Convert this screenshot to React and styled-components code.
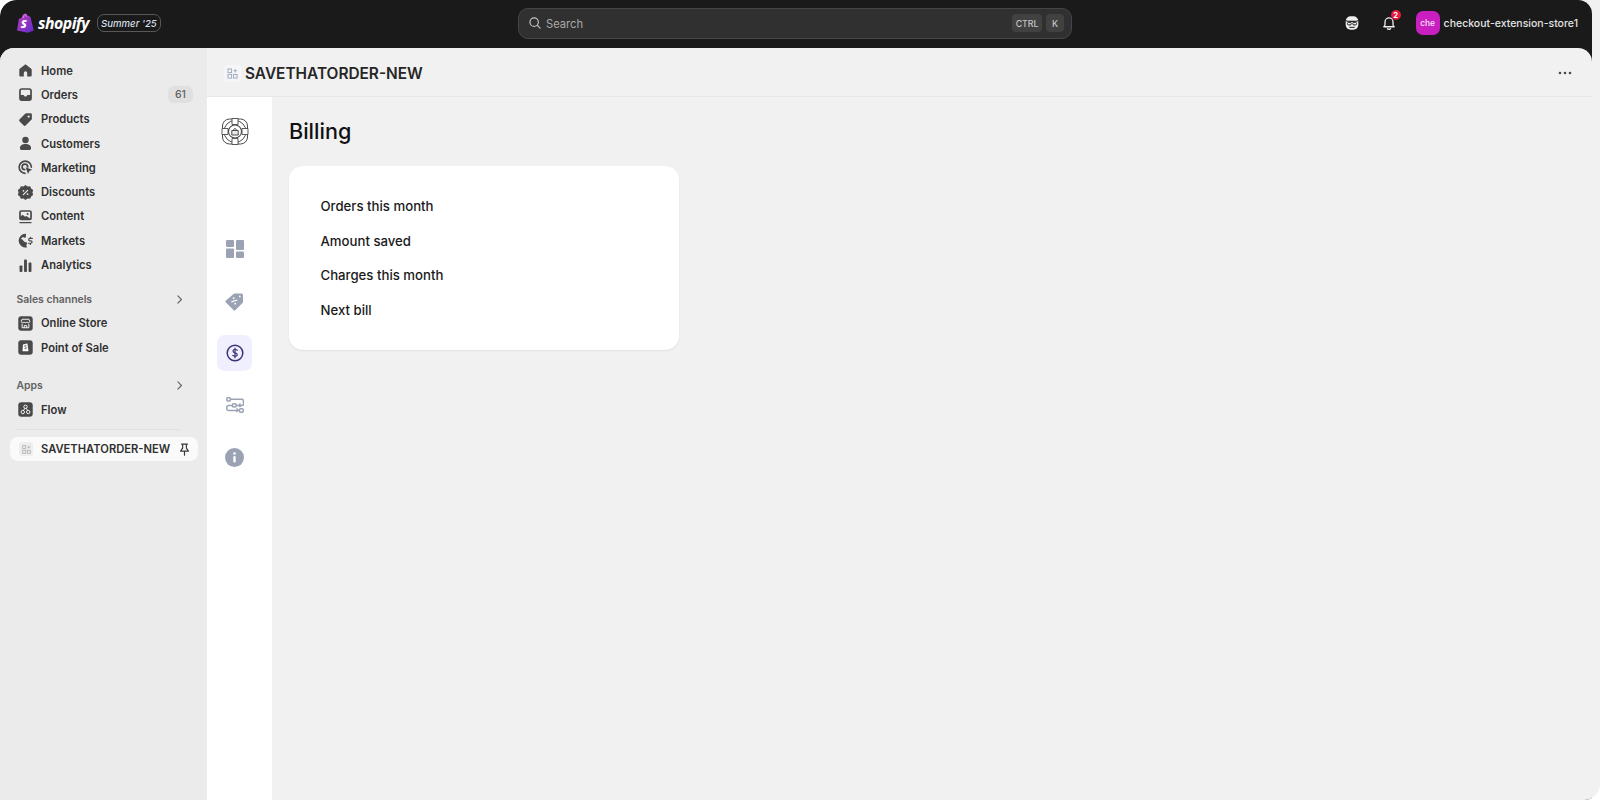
import React from "react";
import styled, { createGlobalStyle } from "styled-components";

const GlobalStyle = createGlobalStyle`
  html, body { margin: 0; padding: 0; background: #fff; }
  body { font-family: Inter, "Liberation Sans", sans-serif; }
`;

const Frame = styled.div`
  width: 1600px;
  height: 800px;
  border-radius: 16px 0 16px 0;
  overflow: hidden;
  display: flex;
  background: #f1f1f1;
`;

const Shell = styled.div`
  flex: 1;
  min-width: 0;
  margin-right: 8px;
  display: flex;
  flex-direction: column;
  background: #1a1a1a;
  border-radius: 16px 14px 0 0;
`;

const TopBar = styled.header`
  height: 48px;
  flex: none;
  display: grid;
  grid-template-columns: 505px 554px 1fr;
  align-items: center;
  padding: 0 14px 2px 13px;
  box-sizing: border-box;
`;

const Brand = styled.div`
  display: flex;
  align-items: center;
  padding-left: 4px;
`;

const Wordmark = styled.span`
  font-family: "Open Sans", sans-serif;
  font-style: italic;
  font-weight: 700;
  font-size: 15.8px;
  letter-spacing: -0.5px;
  color: #fff;
  margin-left: 4px;
`;

const Season = styled.span`
  margin-left: 8px;
  height: 18px;
  width: 64px;
  box-sizing: border-box;
  border: 1px solid #585858;
  border-radius: 7px;
  display: flex;
  align-items: center;
  justify-content: center;
  font-size: 9.6px;
  font-style: italic;
  font-weight: 500;
  color: #d5dfe8;
`;

const Search = styled.div`
  height: 31px;
  box-sizing: border-box;
  background: #303030;
  border: 1px solid #454545;
  border-radius: 10px;
  display: flex;
  align-items: center;
  padding: 0 7px 0 9px;
  color: #a8a8a8;
  font-size: 11.2px;
`;

const SearchText = styled.span`
  margin-left: 4px;
  padding-top: 1px;
  flex: 1;
`;

const Key = styled.kbd`
  font-family: Inter, sans-serif;
  font-size: 8.8px;
  font-weight: 500;
  height: 18px;
  min-width: 18px;
  padding: 0 3.5px;
  box-sizing: border-box;
  margin-left: 4px;
  background: #414141;
  border-radius: 4px;
  color: #c4c4c4;
  display: flex;
  align-items: center;
  justify-content: center;
`;

const TopActions = styled.div`
  display: flex;
  align-items: center;
  justify-content: flex-end;
`;

const ActionIcon = styled.span`
  position: relative;
  display: flex;
  margin-right: ${(props) => props.gap}px;
`;

const Count = styled.span`
  position: absolute;
  top: -5px;
  right: -4px;
  width: 10px;
  height: 10px;
  border-radius: 50%;
  background: #e51c3f;
  color: #fff;
  font-size: 7.5px;
  font-weight: 700;
  display: flex;
  align-items: center;
  justify-content: center;
`;

const Avatar = styled.span`
  width: 24px;
  height: 24px;
  border-radius: 7px;
  background: #c91fc0;
  color: #f8e3f6;
  font-size: 8.4px;
  font-weight: 500;
  display: flex;
  align-items: center;
  justify-content: center;
`;

const StoreName = styled.span`
  margin-left: 4px;
  font-size: 10.5px;
  font-weight: 500;
  color: #e3e3e3;
  white-space: nowrap;
`;

const Body = styled.div`
  flex: 1;
  min-height: 0;
  display: flex;
  background: #f1f1f1;
  border-radius: 14px 14px 0 0;
  overflow: hidden;
`;

const Sidebar = styled.nav`
  width: 207px;
  flex: none;
  background: #ebebeb;
  padding: 10.5px 10px 0 9.5px;
  box-sizing: border-box;
`;

const NavItem = styled.div`
  height: 24.3px;
  display: flex;
  align-items: center;
  padding-left: 7.5px;
  font-size: 11.2px;
  font-weight: 600;
  color: #303030;
`;

const NavIcon = styled.span`
  width: 17px;
  height: 17px;
  display: flex;
  margin-right: 7px;
  flex: none;
`;

const NavCount = styled.span`
  margin-left: auto;
  margin-right: 4px;
  width: 25px;
  height: 17px;
  border-radius: 6px;
  background: #e0e0e0;
  color: #616161;
  font-size: 10.5px;
  font-weight: 500;
  display: flex;
  align-items: center;
  justify-content: center;
`;

const SectionHead = styled.div`
  height: 24px;
  margin-top: ${(props) => props.top}px;
  display: flex;
  align-items: center;
  justify-content: space-between;
  padding: 0 11px 0 7px;
  font-size: 10.4px;
  font-weight: 600;
  color: #616161;
`;

const Divider = styled.div`
  height: 1px;
  margin: 7px 6px 7px;
  width: 165px;
  background: #e1e1e1;
`;

const PinnedApp = styled.div`
  height: 24px;
  width: 188px;
  border-radius: 8px;
  background: #fafafa;
  display: flex;
  align-items: center;
  padding: 0 5.5px 0 7.5px;
  box-sizing: border-box;
  font-size: 11.2px;
  font-weight: 600;
  color: #303030;
  white-space: nowrap;
`;

const AppTile = styled.span`
  width: 14px;
  height: 14px;
  margin: 0 8px 0 2px;
  background: #eeeeee;
  border-radius: 3px;
  flex: none;
  display: flex;
  align-items: center;
  justify-content: center;
`;

const PinHolder = styled.span`
  margin-left: auto;
  display: flex;
`;

const Main = styled.main`
  flex: 1;
  min-width: 0;
  display: flex;
  flex-direction: column;
`;

const AppBar = styled.div`
  height: 49px;
  flex: none;
  box-sizing: border-box;
  border-bottom: 1px solid #e8e8e8;
  display: flex;
  align-items: center;
  padding: 2px 20px 0 17px;
`;

const TitleTile = styled.span`
  width: 17px;
  height: 17px;
  border-radius: 4px;
  background: #f5f6f8;
  display: flex;
  align-items: center;
  justify-content: center;
  margin-right: 4px;
`;

const AppTitle = styled.h2`
  margin: 0;
  font-size: 15.4px;
  font-weight: 600;
  color: #262626;
`;

const MoreDots = styled.span`
  margin-left: auto;
  display: flex;
`;

const Workspace = styled.div`
  flex: 1;
  display: flex;
  min-height: 0;
`;

const Rail = styled.aside`
  width: 65px;
  flex: none;
  background: #fff;
  display: flex;
  flex-direction: column;
  align-items: center;
  padding: 20px 10px 0 0;
  box-sizing: border-box;
`;

const RailLogo = styled.div`
  display: flex;
  margin-bottom: 86px;
`;

const RailList = styled.div`
  display: flex;
  flex-direction: column;
  gap: 16px;
`;

const RailItem = styled.div`
  width: 35px;
  height: 36px;
  border-radius: 8px;
  display: flex;
  align-items: center;
  justify-content: center;
  background: ${(props) => (props.$active ? "#f0effd" : "transparent")};
`;

const Content = styled.section`
  flex: 1;
  padding: 19px 17px;
`;

const PageTitle = styled.h1`
  margin: 0 0 20px;
  font-size: 21.6px;
  line-height: 30px;
  font-weight: 500;
  color: #111;
`;

const Card = styled.div`
  width: 390px;
  height: 184px;
  box-sizing: border-box;
  background: #fff;
  border-radius: 14px;
  box-shadow: 0 1px 2px rgba(0, 0, 0, 0.07);
  padding: 23px 31.5px;
  display: flex;
  flex-direction: column;
`;

const Stat = styled.div`
  height: 34.7px;
  display: flex;
  align-items: center;
  font-size: 13.2px;
  font-weight: 500;
  color: #1a1a1a;
`;

const Svg = ({ size = 17, box = 20, children, ...rest }) => (
  <svg width={size} height={size} viewBox={`0 0 ${box} ${box}`} fill="none" {...rest}>
    {children}
  </svg>
);

const DARK = "#4a4a4a";

const HomeIcon = () => (
  <Svg>
    <path d="M10 2.500 3.200 8a1.500 1.500 0 0 0-.5 1.100V15.500A1.500 1.500 0 0 0 4.200 17H8v-4.200a2 2 0 0 1 4 0V17h3.800a1.500 1.500 0 0 0 1.500-1.500V9.100a1.500 1.500 0 0 0-.5-1.100L10 2.500Z" fill={DARK} />
  </Svg>
);
const OrdersIcon = () => (
  <Svg>
    <path fillRule="evenodd" d="M5.500 2.500h9A3 3 0 0 1 17.500 5.500v9a3 3 0 0 1-3 3h-9a3 3 0 0 1-3-3v-9a3 3 0 0 1 3-3Zm-1 8h2.700c.4 0 .7.200.9.500l.4.800c.2.300.5.500.9.500h1.200c.4 0 .7-.2.9-.5l.4-.8c.2-.3.5-.5.9-.5h2.700V5.500a1 1 0 0 0-1-1h-9a1 1 0 0 0-1 1V10.500Z" fill={DARK} />
  </Svg>
);
const ProductsIcon = () => (
  <Svg>
    <path fillRule="evenodd" d="M11 2.500h5A1.500 1.500 0 0 1 17.500 4v5a2 2 0 0 1-.6 1.400l-6.500 6.500a2 2 0 0 1-2.800 0l-4.500-4.500a2 2 0 0 1 0-2.800l6.500-6.500A2 2 0 0 1 11 2.500Zm2.700 5.300a1.300 1.300 0 1 0 0-2.600 1.300 1.300 0 0 0 0 2.600Z" fill={DARK} />
  </Svg>
);
const CustomersIcon = () => (
  <Svg>
    <circle cx="10" cy="6" r="3.800" fill={DARK} />
    <path d="M3.500 15.200c0-3 2.900-4.500 6.500-4.500s6.500 1.500 6.500 4.500v.8a1.500 1.500 0 0 1-1.500 1.500H5A1.500 1.500 0 0 1 3.500 16v-.8Z" fill={DARK} />
  </Svg>
);
const MarketingIcon = () => (
  <Svg>
    <path d="M9.500 16.800a7.200 7.200 0 1 1 7.400-7.300" stroke={DARK} strokeWidth="2" strokeLinecap="round" />
    <path d="M9 12.600a3.300 3.300 0 1 1 3.600-3.300" stroke={DARK} strokeWidth="2" strokeLinecap="round" />
    <path d="m10 9.800 8 2.700-3.300 1.600-1.700 3.500-3-7.800Z" fill={DARK} />
  </Svg>
);
const DiscountsIcon = () => (
  <Svg>
    <path d="M10 1.200l2.500 1.600 3-.2 1.100 2.800 2.400 1.800-.8 2.800.8 2.800-2.400 1.800-1.100 2.800-3-.2L10 18.800l-2.500-1.600-3 .2-1.100-2.800L1 12.800l.8-2.800L1 7.200l2.400-1.800 1.100-2.800 3 .2L10 1.200Z" fill={DARK} />
    <path d="m7.500 12.500 5-5" stroke="#ebebeb" strokeWidth="1.400" strokeLinecap="round" />
    <circle cx="7.600" cy="8" r="1" fill="#ebebeb" />
    <circle cx="12.400" cy="12" r="1" fill="#ebebeb" />
  </Svg>
);
const ContentIcon = () => (
  <Svg>
    <path fillRule="evenodd" d="M5 2.500h10A2.500 2.500 0 0 1 17.500 5v7a2.500 2.500 0 0 1-2.500 2.500H5A2.500 2.500 0 0 1 2.500 12V5A2.500 2.500 0 0 1 5 2.500Zm0 2a.5.5 0 0 0-.5.500v4.600l2-1.600 3 2.400 1.500-1 4 2.800h.5V5a.5.5 0 0 0-.5-.5H5Z" fill={DARK} />
    <circle cx="12.500" cy="7" r="1.200" fill={DARK} />
    <path d="M3.500 17.200h13" stroke={DARK} strokeWidth="1.600" strokeLinecap="round" />
  </Svg>
);
const MarketsIcon = () => (
  <Svg>
    <path d="M10.500 2.200a8 8 0 1 0 1.500 15.700c-1.400-1.100-1.200-2.600-.3-3.800.7-.9 0-2-1.300-2-1.700 0-2.400-1.100-3.400-2.600L4.700 8c.7-1.700 2.500-2.300 3.900-1.500.9.500 1.900 0 1.900-1V2.200Z" fill={DARK} />
    <path d="M18 7.600h-2.800a1.400 1.400 0 0 0 0 2.800h1.100a1.400 1.400 0 0 1 0 2.800H13.500M15.700 6.200v1.400m0 5.600v1.400" stroke={DARK} strokeWidth="1.400" strokeLinecap="round" />
  </Svg>
);
const AnalyticsIcon = () => (
  <Svg>
    <rect x="3" y="10" width="3.400" height="7.500" rx="1" fill={DARK} />
    <rect x="8.300" y="3" width="3.400" height="14.500" rx="1" fill={DARK} />
    <rect x="13.600" y="6.500" width="3.400" height="11" rx="1" fill={DARK} />
  </Svg>
);
const StoreIcon = () => (
  <Svg>
    <rect x="1.500" y="1.500" width="17" height="17" rx="3.500" fill={DARK} />
    <path d="M6 5h8l1 2.700a1.700 1.700 0 0 1-3.300.4 1.900 1.900 0 0 1-3.400 0A1.700 1.700 0 0 1 5 7.700L6 5Z" stroke="#fff" strokeWidth="1.100" />
    <path d="M6 10.500V15h8v-4.500M8.500 15v-2.500h3V15" stroke="#fff" strokeWidth="1.100" />
  </Svg>
);
const PosIcon = () => (
  <Svg>
    <rect x="1.500" y="1.500" width="17" height="17" rx="3.500" fill={DARK} />
    <path d="M7 6.500 11.800 5.300c.2 0 .4 0 .5.300L13.500 14.500H6.500L7 6.500Z" fill="#fff" />
    <path d="M11 7.800c-.8-.5-2-.3-2 .6 0 1.100 2 1 2 2.200 0 1-1.300 1.200-2.200.7" stroke={DARK} strokeWidth="1" />
  </Svg>
);
const FlowIcon = () => (
  <Svg>
    <rect x="1.500" y="1.500" width="17" height="17" rx="3.500" fill={DARK} />
    <circle cx="10" cy="6.800" r="2" stroke="#fff" strokeWidth="1.100" />
    <circle cx="6.800" cy="13" r="2" stroke="#fff" strokeWidth="1.100" />
    <circle cx="13.200" cy="13" r="2" stroke="#fff" strokeWidth="1.100" />
    <path d="m9 8.600-1.300 2.600m3.300-2.600 1.300 2.600" stroke="#fff" strokeWidth="1.100" />
  </Svg>
);
const Chevron = () => (
  <Svg size={13}>
    <path d="m7.500 4.500 5.500 5.500-5.500 5.500" stroke="#616161" strokeWidth="1.700" strokeLinecap="round" strokeLinejoin="round" />
  </Svg>
);
const PinIcon = () => (
  <Svg size={15}>
    <path d="M6 2.800h8M7.500 2.800v5.400L4.800 12.200h10.400l-2.700-4V2.800M10 12.200v5.300" stroke="#3a3a3a" strokeWidth="1.600" strokeLinecap="round" strokeLinejoin="round" />
  </Svg>
);
const AppMark = ({ color, size }) => (
  <Svg size={size}>
    <g stroke={color} strokeWidth="1.600">
      <rect x="3" y="3" width="5.500" height="5.500" />
      <rect x="3" y="11.500" width="5.500" height="5.500" />
      <rect x="11.500" y="11.500" width="5.500" height="5.500" />
      <path d="M14.200 3v5.500M11.500 5.700h5.500" />
    </g>
  </Svg>
);

const ShopifyBag = () => (
  <svg width="17" height="20" viewBox="0 0 17 20">
    <defs>
      <linearGradient id="bag" x1="0" y1="0" x2="1" y2="1">
        <stop offset="0" stopColor="#c23fbe" />
        <stop offset="1" stopColor="#5e2bc9" />
      </linearGradient>
    </defs>
    <path d="M4.500 5C5 2.500 6.500.6 8.300.6c1.300 0 2 1.200 2.300 2.300L12 2.700l1.500 1.500L16.800 17.500 10.800 19.700 0 17.600 2 5.700 4.500 5Z" fill="url(#bag)" />
    <path d="M6.200 5.200C6.600 3 7.500 1.600 8.500 1.600c.6 0 1 1 1.100 2" stroke="#e9a8e0" strokeWidth=".8" fill="none" />
    <text x="3.800" y="15.200" fontFamily="Open Sans, sans-serif" fontWeight="800" fontStyle="italic" fontSize="11" fill="#fff">S</text>
  </svg>
);

const SearchIcon = () => (
  <Svg size={14}>
    <circle cx="8.800" cy="8.800" r="6" stroke="#c4c4c4" strokeWidth="1.700" />
    <path d="m13.300 13.300 4 4" stroke="#c4c4c4" strokeWidth="1.700" strokeLinecap="round" />
  </Svg>
);
const MaskIcon = () => (
  <Svg size={18}>
    <rect x="3" y="2.500" width="14" height="15" rx="5.500" fill="#eeeeee" />
    <path d="M3 7.500c2 .8 12 .8 14 0" stroke="#1a1a1a" strokeWidth="1.300" />
    <rect x="5" y="9.300" width="4.200" height="2.800" rx="1.200" stroke="#1a1a1a" strokeWidth="1.100" />
    <rect x="10.800" y="9.300" width="4.200" height="2.800" rx="1.200" stroke="#1a1a1a" strokeWidth="1.100" />
    <path d="M7.500 14.800h5" stroke="#1a1a1a" strokeWidth="1.100" strokeLinecap="round" />
  </Svg>
);
const BellIcon = () => (
  <Svg size={16}>
    <path d="M5 12.500V8.700a5 5 0 0 1 10 0v3.800l1.500 2.200h-13L5 12.500Z" stroke="#f0f0f0" strokeWidth="1.600" strokeLinejoin="round" />
    <path d="M8 17.200c.8.800 3.200.8 4 0" stroke="#f0f0f0" strokeWidth="1.600" strokeLinecap="round" />
  </Svg>
);
const Dots = () => (
  <svg width="14" height="4" viewBox="0 0 14 4">
    <circle cx="2" cy="2" r="1.300" fill="#4a4a4a" />
    <circle cx="7" cy="2" r="1.300" fill="#4a4a4a" />
    <circle cx="12" cy="2" r="1.300" fill="#4a4a4a" />
  </svg>
);

const LifeRing = () => (
  <svg width="28" height="28" viewBox="0 0 28 28" fill="none" stroke="#4a4a4a">
    <rect x="1.500" y="2" width="25" height="25" rx="7" strokeWidth="1" />
    <circle cx="14" cy="14.500" r="11" strokeWidth="1" fill="#fff" />
    <circle cx="14" cy="14.500" r="6.500" strokeWidth="1.100" />
    <path d="M11 1.500h6v6h-6zM11 21.500h6v6h-6zM1 11.500h6v6H1zM21 11.500h6v6h-6z" strokeWidth=".9" fill="#fff" />
    <path d="M10.800 18v-4.500h6.400V18Zm1.700-4.500c0-2.600 3-2.600 3 0" strokeWidth="1" fill="#e8e8e8" />
  </svg>
);

const RAIL = "#9aa2b3";
const DashboardIcon = () => (
  <svg width="18" height="18" viewBox="0 0 18 18" fill={RAIL}>
    <rect x="0" y="0" width="8" height="7" rx="1" />
    <rect x="0" y="8.500" width="8" height="9.500" rx="1" />
    <rect x="10" y="0" width="8" height="10" rx="1" />
    <rect x="10" y="11.500" width="8" height="6.500" rx="1" />
  </svg>
);
const PriceTagIcon = () => (
  <svg width="19" height="19" viewBox="0 0 19 19">
    <path fillRule="evenodd" d="M9.500 1.500h7A1.500 1.500 0 0 1 18 3v7a1.500 1.500 0 0 1-.5 1L10.500 18a1.500 1.500 0 0 1-2.100 0L1 10.600a1.500 1.500 0 0 1 0-2.100L8.500 2a1.500 1.500 0 0 1 1-.5Zm5.300 3.800a.9.900 0 1 0 0-1.800.9.900 0 0 0 0 1.800Z" fill={RAIL} />
    <path d="M6.300 9.800l6-1.800" stroke="#fff" strokeWidth="1.300" />
    <circle cx="8.600" cy="6.200" r=".9" fill="#fff" />
    <circle cx="10.200" cy="11.700" r=".9" fill="#fff" />
  </svg>
);
const DollarIcon = () => (
  <svg width="18" height="18" viewBox="0 0 18 18" fill="none" stroke="#3a3178">
    <circle cx="9" cy="9" r="7.800" strokeWidth="1.500" />
    <path d="M11.300 6.300c-.6-1-4.300-1.300-4.300.7 0 2.400 4.300 1.300 4.300 3.800 0 2-3.700 1.700-4.500.6M9 4.200v9.600" strokeWidth="1.200" strokeLinecap="round" />
  </svg>
);
const WorkflowIcon = () => (
  <svg width="18" height="17" viewBox="0 0 18 17" fill="none" stroke={RAIL} strokeWidth="1.500">
    <rect x=".8" y=".8" width="3.600" height="3.200" rx="1" />
    <path d="M4.500 2.300H15.500a2 2 0 0 1 2 2V7a1.500 1.500 0 0 1-1.500 1.500H10" />
    <rect x="6.500" y="6.800" width="3.600" height="3.200" rx="1" />
    <path d="M6.500 8.500H2.500a1.700 1.700 0 0 0-1.700 1.700v1.500c0 1 .8 1.700 1.700 1.700H12" />
    <rect x="13.500" y="11.800" width="3.700" height="3.400" rx="1" />
    <path d="m10.500 11.500 1.800 1.700-1.800 1.700M14.500 6.500l-1.500 2 1.500 1.500" />
  </svg>
);
const InfoIcon = () => (
  <svg width="19" height="19" viewBox="0 0 19 19">
    <circle cx="9.500" cy="9.500" r="9.500" fill={RAIL} />
    <circle cx="9.500" cy="5.500" r="1.300" fill="#fff" />
    <rect x="8.300" y="8" width="2.400" height="6.500" rx="1" fill="#fff" />
  </svg>
);

const mainNav = [
  { label: "Home", icon: <HomeIcon /> },
  { label: "Orders", icon: <OrdersIcon />, count: 61 },
  { label: "Products", icon: <ProductsIcon /> },
  { label: "Customers", icon: <CustomersIcon /> },
  { label: "Marketing", icon: <MarketingIcon /> },
  { label: "Discounts", icon: <DiscountsIcon /> },
  { label: "Content", icon: <ContentIcon /> },
  { label: "Markets", icon: <MarketsIcon /> },
  { label: "Analytics", icon: <AnalyticsIcon /> },
];

const channels = [
  { label: "Online Store", icon: <StoreIcon /> },
  { label: "Point of Sale", icon: <PosIcon /> },
];

const railItems = [
  { id: "dashboard", icon: <DashboardIcon /> },
  { id: "plans", icon: <PriceTagIcon /> },
  { id: "billing", icon: <DollarIcon />, active: true },
  { id: "flows", icon: <WorkflowIcon /> },
  { id: "info", icon: <InfoIcon /> },
];

const stats = ["Orders this month", "Amount saved", "Charges this month", "Next bill"];

const renderNav = (items) =>
  items.map((item) => (
    <NavItem key={item.label}>
      <NavIcon>{item.icon}</NavIcon>
      {item.label}
      {item.count && <NavCount>{item.count}</NavCount>}
    </NavItem>
  ));

export default function App() {
  return (
    <>
      <GlobalStyle />
      <Frame>
        <Shell>
          <TopBar>
            <Brand>
              <ShopifyBag />
              <Wordmark>shopify</Wordmark>
              <Season>Summer '25</Season>
            </Brand>
            <Search>
              <SearchIcon />
              <SearchText>Search</SearchText>
              <Key>CTRL</Key>
              <Key>K</Key>
            </Search>
            <TopActions>
              <ActionIcon gap={20}><MaskIcon /></ActionIcon>
              <ActionIcon gap={19}>
                <BellIcon />
                <Count>2</Count>
              </ActionIcon>
              <Avatar>che</Avatar>
              <StoreName>checkout-extension-store1</StoreName>
            </TopActions>
          </TopBar>
          <Body>
            <Sidebar>
              {renderNav(mainNav)}
              <SectionHead top={10}>
                Sales channels
                <Chevron />
              </SectionHead>
              {renderNav(channels)}
              <SectionHead top={14}>
                Apps
                <Chevron />
              </SectionHead>
              {renderNav([{ label: "Flow", icon: <FlowIcon /> }])}
              <Divider />
              <PinnedApp>
                <AppTile><AppMark color="#b4b4b4" size={11} /></AppTile>
                SAVETHATORDER-NEW
                <PinHolder><PinIcon /></PinHolder>
              </PinnedApp>
            </Sidebar>
            <Main>
              <AppBar>
                <TitleTile><AppMark color="#a6b0c0" size={13} /></TitleTile>
                <AppTitle>SAVETHATORDER-NEW</AppTitle>
                <MoreDots><Dots /></MoreDots>
              </AppBar>
              <Workspace>
                <Rail>
                  <RailLogo><LifeRing /></RailLogo>
                  <RailList>
                    {railItems.map((item) => (
                      <RailItem key={item.id} $active={item.active}>{item.icon}</RailItem>
                    ))}
                  </RailList>
                </Rail>
                <Content>
                  <PageTitle>Billing</PageTitle>
                  <Card>
                    {stats.map((label) => (
                      <Stat key={label}>{label}</Stat>
                    ))}
                  </Card>
                </Content>
              </Workspace>
            </Main>
          </Body>
        </Shell>
      </Frame>
    </>
  );
}
